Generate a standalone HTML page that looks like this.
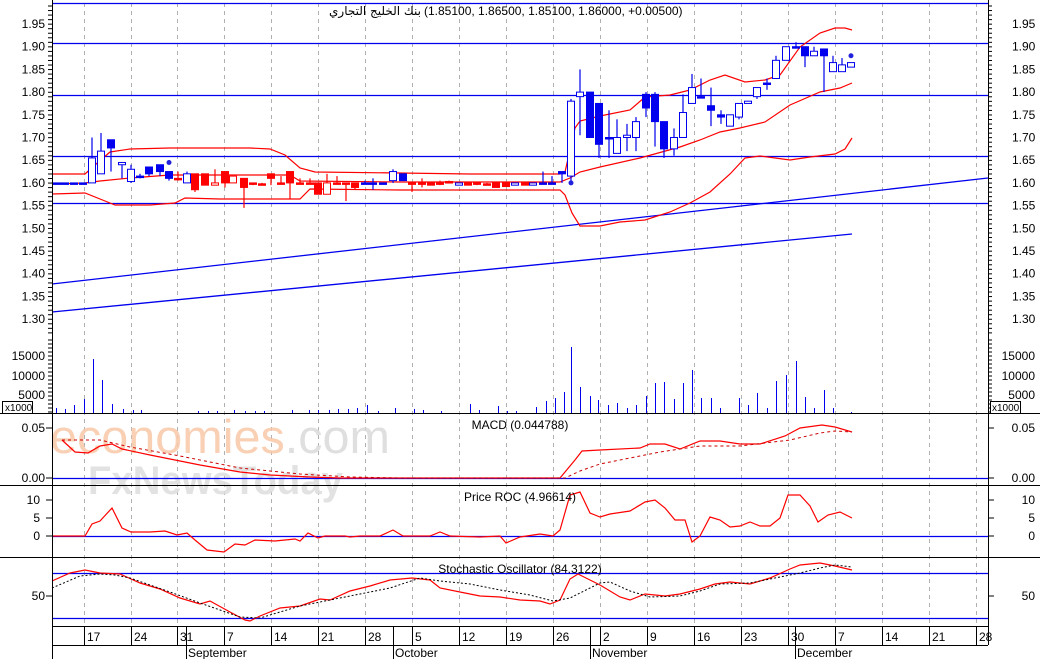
<!DOCTYPE html>
<html><head><meta charset="utf-8"><style>
html,body{margin:0;padding:0;background:#fff;}
svg{display:block;font-family:"Liberation Sans","DejaVu Sans",sans-serif;}
</style></head><body>
<svg id="s" width="1040" height="659" viewBox="0 0 1040 659" xmlns="http://www.w3.org/2000/svg">
<rect width="1040" height="659" fill="#fff"/>
<g id="grid" stroke="#b0b0b0" stroke-dasharray="4,4" stroke-width="1"></g>
<!-- watermark -->
<text x="50" y="453" font-size="47" fill="#f8c8a8" opacity="0.85" textLength="340" lengthAdjust="spacingAndGlyphs">economies<tspan fill="#dadada">.com</tspan></text>
<text x="88" y="494" font-size="40" font-weight="bold" fill="#dedede" opacity="0.85" textLength="255" lengthAdjust="spacingAndGlyphs">FxNewsToday</text>
<!-- fib lines -->
<g stroke="#0000ee" stroke-width="1.3">
<line x1="52" y1="3.5" x2="988" y2="3.5"/>
<line x1="52" y1="43.5" x2="988" y2="43.5"/>
<line x1="52" y1="95.5" x2="988" y2="95.5"/>
<line x1="52" y1="156.5" x2="988" y2="156.5"/>
<line x1="52" y1="203.5" x2="988" y2="203.5"/>
<line x1="52" y1="284" x2="988" y2="178"/>
<line x1="52" y1="312" x2="852" y2="234"/>
<line x1="52" y1="478.5" x2="988" y2="478.5"/>
<line x1="52" y1="536.5" x2="988" y2="536.5"/>
<line x1="52" y1="573.5" x2="988" y2="573.5"/>
<line x1="52" y1="618.5" x2="988" y2="618.5"/>
</g>
<!-- bollinger -->
<g fill="none" stroke="#ff0000" stroke-width="1.2">
<polyline points="52,174 85,174 95,165 110,152 130,149 170,148 250,148 270,149 285,155 300,168 315,172 400,173 470,174 560,174 565,172 570,150 575,128 580,121 600,116 630,110 645,97 670,95 690,90 710,80 725,75 745,82 765,80 780,75 800,47 820,33 835,28 845,28 852,30"/>
<polyline points="52,184 85,183 100,181 130,178 170,175 290,175 300,181 400,182 560,182 570,178 580,172 600,167 640,158 680,147 700,140 720,132 740,128 765,122 790,105 820,92 840,88 852,83"/>
<polyline points="52,194 85,193 105,201 115,205 135,205 150,205 175,203 185,198 220,199 300,199 310,189 400,190 560,190 565,195 572,213 580,226 600,226 620,222 645,220 670,212 690,203 710,192 730,174 745,158 760,156 790,160 810,157 835,154 845,149 852,138"/>
</g>
<g id="candles"></g>
<g id="vol" stroke="#0000ee" stroke-width="1"></g>
<!-- MACD -->
<polyline fill="none" stroke="#ff0000" stroke-width="1.2" points="62,440 75,452 88,453 100,446 112,444 122,449 150,455 200,465 240,472 270,475 310,477 340,478 560,478 575,460 582,451 600,450 640,448 650,444 665,444 680,449 700,441 720,441 740,444 760,444 785,436 800,428 822,425 835,427 852,432"/>
<polyline fill="none" stroke="#cc0000" stroke-width="1" stroke-dasharray="3,3" points="62,440 100,440 130,447 180,456 240,468 300,474 350,477 400,478 565,478 580,471 600,464 640,456 660,452 700,446 740,446 790,440 820,433 835,431 852,432"/>
<!-- ROC -->
<polyline fill="none" stroke="#ff0000" stroke-width="1.2" points="52,536 85,536 92,524 100,521 112,508 122,528 131,532 150,532 165,531 177,535 187,533 195,540 207,550 224,552 235,544 245,545 255,540 275,541 295,539 300,541 308,533 318,538 325,536 345,536 350,537 360,536 380,536 393,530 403,536 430,536 440,532 450,536 480,537 500,536 506,543 520,537 540,534 553,536 560,530 570,495 580,492 590,513 600,517 610,514 630,511 645,502 655,500 665,508 675,520 685,520 692,542 700,536 710,517 720,520 730,527 740,526 750,522 760,526 770,526 780,518 788,495 800,495 810,506 818,522 828,515 840,512 852,518"/>
<!-- Stoch -->
<polyline fill="none" stroke="#ff0000" stroke-width="1.2" points="52,581 70,573 85,570 100,573 120,574 140,583 160,589 180,598 200,604 210,601 230,612 245,620 250,621 260,616 280,608 300,606 320,599 330,600 350,591 370,586 390,580 412,578 430,580 440,588 460,592 480,596 500,597 520,600 540,601 550,604 560,600 570,579 578,574 590,580 600,585 620,597 630,600 645,594 665,596 680,594 700,589 715,584 730,582 750,584 770,578 790,569 800,565 820,563 835,566 852,570"/>
<polyline fill="none" stroke="#000" stroke-width="1" stroke-dasharray="2,2" points="52,588 80,576 100,574 115,575 130,578 170,592 200,603 240,617 260,618 300,606 330,600 390,588 420,578 440,581 470,584 500,590 530,595 553,601 570,598 590,588 600,583 610,582 630,591 650,597 680,596 700,591 720,584 750,583 780,577 800,573 820,568 835,565 852,567"/>
<!-- frames -->
<g stroke="#000" stroke-width="1">
<line x1="52.5" y1="0" x2="52.5" y2="659"/>
<line x1="988.5" y1="0" x2="988.5" y2="645"/>
<line x1="0" y1="413.5" x2="1040" y2="413.5"/>
<line x1="0" y1="485.5" x2="1040" y2="485.5"/>
<line x1="0" y1="557.5" x2="1040" y2="557.5"/>
<line x1="52" y1="626.5" x2="988" y2="626.5"/>
<line x1="52" y1="645.5" x2="988" y2="645.5"/>
<line x1="186.5" y1="627" x2="186.5" y2="659"/>
<line x1="393.5" y1="627" x2="393.5" y2="659"/>
<line x1="590.5" y1="627" x2="590.5" y2="659"/>
<line x1="795.5" y1="627" x2="795.5" y2="659"/>
</g>
<g id="ticks" stroke="#000" stroke-width="1"></g>
<rect x="2.5" y="401.5" width="30" height="12" fill="#fff" stroke="#000"/>
<text x="5" y="411" font-size="10">x1000</text>
<rect x="990.5" y="401.5" width="30" height="12" fill="#fff" stroke="#000"/>
<text x="992" y="411" font-size="10">x1000</text>
<g font-size="12" fill="#000" id="labels"></g>
<text x="421" y="15" font-size="12" text-anchor="end" font-family="DejaVu Sans, Liberation Sans, sans-serif">بنك الخليج التجاري</text>
<text x="424" y="15" font-size="12">(1.85100, 1.86500, 1.85100, 1.86000, +0.00500)</text>
<text x="520" y="429" font-size="12" text-anchor="middle">MACD (0.044788)</text>
<text x="520" y="501" font-size="12" text-anchor="middle">Price ROC (4.96614)</text>
<text x="520" y="573" font-size="12" text-anchor="middle">Stochastic Oscillator (84.3122)</text>
<g font-size="12" fill="#000">
<text x="188" y="657">September</text>
<text x="395" y="657">October</text>
<text x="592" y="657">November</text>
<text x="797" y="657">December</text>
</g>
</svg>
<script>
var NS="http://www.w3.org/2000/svg";
function el(p,t,a,txt){var e=document.createElementNS(NS,t);for(var k in a)e.setAttribute(k,a[k]);if(txt!=null)e.textContent=txt;document.getElementById(p).appendChild(e);return e;}
var dx=[84,131,177,224,271,318,365,412,459,506,553,600,647,694,741,788,835,882,929,976];
var dl=["17","24","31","7","14","21","28","5","12","19","26","2","9","16","23","30","7","14","21","28"];
dx.forEach(function(x,i){el("grid","line",{x1:x+.5,y1:3,x2:x+.5,y2:626});
 el("ticks","line",{x1:x+.5,y1:627,x2:x+.5,y2:645});
 el("labels","text",{x:x+3,y:641},dl[i]);});
function py(p){return 24+(1.95-p)*454;}
for(var p=1.30;p<=1.9501;p+=0.05){var y=py(p);
 el("labels","text",{x:45,y:y+4,"text-anchor":"end"},p.toFixed(2));
 el("labels","text",{x:1012,y:y+4},p.toFixed(2));}
for(var y=6;y<=335;y+=4.54){el("ticks","line",{x1:48,y1:y,x2:52,y2:y});el("ticks","line",{x1:988,y1:y,x2:992,y2:y});}
[[15000,356],[10000,376],[5000,395]].forEach(function(v){el("labels","text",{x:45,y:v[1]+4,"text-anchor":"end"},v[0]);el("labels","text",{x:1035,y:v[1]+4,"text-anchor":"end"},v[0]);});
for(var y=340;y<=412;y+=4){el("ticks","line",{x1:48,y1:y,x2:52,y2:y});el("ticks","line",{x1:988,y1:y,x2:992,y2:y});}
[["0.05",428],["0.00",478]].forEach(function(v){el("labels","text",{x:45,y:v[1]+4,"text-anchor":"end"},v[0]);el("labels","text",{x:1035,y:v[1]+4,"text-anchor":"end"},v[0]);});
[["10",500],["5",518],["0",536]].forEach(function(v){el("labels","text",{x:40,y:v[1]+4,"text-anchor":"end"},v[0]);el("labels","text",{x:1035,y:v[1]+4,"text-anchor":"end"},v[0]);});
el("labels","text",{x:45,y:600,"text-anchor":"end"},"50");el("labels","text",{x:1035,y:600,"text-anchor":"end"},"50");
[428,478,500,518,536,596].forEach(function(y){el("ticks","line",{x1:46,y1:y,x2:52,y2:y});el("ticks","line",{x1:988,y1:y,x2:994,y2:y});});
var B="#0000ee",R="#ff0000";
var C=[[57,1.60,1.60,1.60,1.60,B],[65,1.60,1.60,1.60,1.60,B],[74,1.60,1.60,1.60,1.60,B],[83,1.60,1.60,1.60,1.60,B],
[92,1.60,1.655,1.70,1.60,B],[101,1.62,1.67,1.71,1.62,B],[111,1.695,1.677,1.695,1.625,B],[122,1.64,1.645,1.645,1.61,B],
[131,1.603,1.63,1.64,1.60,B],[140,1.615,1.615,1.62,1.61,B],[149,1.635,1.62,1.635,1.615,B],[160,1.64,1.625,1.64,1.615,B],
[169,1.625,1.61,1.625,1.605,B],[178,1.61,1.61,1.625,1.605,R],[187,1.60,1.62,1.625,1.60,B],[195,1.62,1.585,1.62,1.58,R],
[205,1.62,1.595,1.62,1.595,R],[215,1.595,1.60,1.63,1.595,R],[225,1.625,1.60,1.625,1.59,R],[233,1.60,1.615,1.615,1.60,R],
[244,1.61,1.59,1.61,1.545,R],[253,1.60,1.60,1.60,1.595,R],[262,1.598,1.598,1.60,1.598,R],[271,1.62,1.61,1.62,1.595,R],
[281,1.60,1.60,1.615,1.60,R],[290,1.625,1.60,1.625,1.565,R],[300,1.60,1.60,1.61,1.60,R],[310,1.60,1.60,1.61,1.60,R],
[318,1.60,1.575,1.60,1.575,R],[327,1.575,1.60,1.62,1.575,R],[337,1.60,1.60,1.615,1.60,R],[346,1.60,1.60,1.60,1.56,R],
[355,1.60,1.59,1.60,1.585,R],[365,1.60,1.60,1.605,1.60,B],[373,1.60,1.60,1.61,1.585,B],[383,1.60,1.60,1.60,1.60,B],
[393,1.605,1.625,1.63,1.60,B],[403,1.62,1.605,1.62,1.605,B],[412,1.60,1.60,1.60,1.58,R],[422,1.60,1.60,1.61,1.59,R],
[431,1.60,1.595,1.60,1.595,R],[440,1.60,1.60,1.605,1.595,R],[449,1.603,1.603,1.605,1.60,R],[459,1.595,1.60,1.60,1.595,B],
[468,1.60,1.595,1.60,1.595,R],[477,1.60,1.60,1.60,1.595,R],[487,1.598,1.598,1.60,1.598,R],[496,1.60,1.59,1.60,1.59,R],
[506,1.60,1.592,1.60,1.592,R],[515,1.595,1.60,1.60,1.595,B],[525,1.60,1.595,1.60,1.595,R],[533,1.595,1.60,1.60,1.595,B],
[543,1.60,1.60,1.625,1.60,B],[552,1.60,1.60,1.615,1.60,B],[562,1.625,1.62,1.625,1.60,B],[571,1.615,1.78,1.785,1.605,B],
[580,1.79,1.80,1.85,1.705,B],[590,1.80,1.70,1.80,1.70,B],[599,1.775,1.685,1.775,1.655,B],[609,1.70,1.70,1.76,1.655,B],
[617,1.665,1.70,1.74,1.665,B],[627,1.70,1.705,1.73,1.67,B],[636,1.70,1.735,1.745,1.67,B],[646,1.795,1.765,1.80,1.745,B],
[655,1.795,1.735,1.80,1.68,B],[664,1.735,1.675,1.735,1.655,B],[674,1.675,1.70,1.72,1.66,B],[683,1.70,1.755,1.795,1.70,B],
[692,1.775,1.81,1.84,1.775,B],[701,1.79,1.787,1.83,1.787,B],[711,1.77,1.76,1.81,1.725,B],[721,1.75,1.745,1.76,1.73,B],
[730,1.725,1.75,1.75,1.725,B],[739,1.745,1.775,1.775,1.74,B],[748,1.775,1.78,1.78,1.775,B],[757,1.79,1.81,1.81,1.785,B],
[767,1.82,1.82,1.83,1.805,B],[776,1.83,1.87,1.88,1.83,B],[786,1.87,1.90,1.90,1.87,B],[796,1.90,1.90,1.91,1.90,B],
[805,1.90,1.88,1.90,1.855,B],[814,1.88,1.89,1.90,1.88,B],[824,1.895,1.88,1.895,1.80,B],[833,1.845,1.865,1.88,1.845,B],
[842,1.845,1.86,1.875,1.845,B],[851,1.855,1.865,1.865,1.855,B]];
C.forEach(function(c){var x=c[0],yo=py(c[1]),yc=py(c[2]),yh=py(c[3]),yl=py(c[4]);
 el("candles","line",{x1:x,y1:yh,x2:x,y2:yl,stroke:c[5],"stroke-width":1.2});
 var t=Math.min(yo,yc),h=Math.max(Math.abs(yo-yc),1.5);
 var hollow=c[2]>c[1];
 el("candles","rect",{x:x-3.5,y:t,width:7,height:h,fill:hollow?"#fff":c[5],stroke:c[5],"stroke-width":1});});
[[169,1.645],[571,1.60],[851,1.88]].forEach(function(d){el("candles","circle",{cx:d[0],cy:py(d[1]),r:2.5,fill:"#2222dd"});});
var V=[[56,408],[65,409],[74,405],[84,399],[93,359],[102,380],[112,404],[123,409],[133,410],[141,410],[198,411],[208,411],[217,411],[234,410],[245,411],[255,411],[264,411],[292,410],[309,410],[318,410],[329,410],[338,409],[348,409],[357,408],[367,405],[378,411],[395,408],[414,409],[423,410],[441,411],[470,404],[479,410],[498,406],[507,411],[516,411],[536,407],[546,401],[555,398],[564,392],[571,347],[580,387],[590,396],[598,400],[608,405],[617,403],[627,408],[636,405],[646,396],[655,383],[664,382],[674,399],[683,383],[692,370],[701,398],[711,398],[720,408],[739,398],[748,405],[757,393],[767,408],[776,381],[786,375],[796,361],[805,397],[814,408],[824,390],[833,408],[851,412]];
V.forEach(function(v){el("vol","line",{x1:v[0]+.5,y1:413,x2:v[0]+.5,y2:v[1]});});
</script>
</body></html>
